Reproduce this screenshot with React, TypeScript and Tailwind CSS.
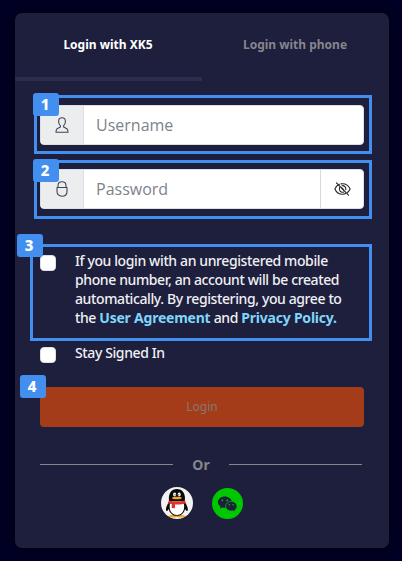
import React from 'react';

function Badge({ n, className }: { n: number; className: string }) {
  return (
    <span
      className={`absolute z-10 flex h-[23px] w-[26px] items-center justify-center rounded-[3px] bg-[#438ff0] pr-[2px] text-[15px] font-extrabold leading-none text-white ${className}`}
    >
      {n}
    </span>
  );
}

function Frame({ n, className, badge }: { n: number; className: string; badge: string }) {
  return (
    <div className={`pointer-events-none absolute border-3 border-[#438ff0] ${className}`}>
      <Badge n={n} className={badge} />
    </div>
  );
}

function UserIcon() {
  return (
    <svg width="14" height="16" viewBox="0 0 14 16" fill="none" stroke="#3d4557" strokeWidth="1.1" strokeLinejoin="round">
      <path d="M7 .7C4.900.7 3.600 2.200 3.600 4.400c0 1.900.7 3.300 1.800 4.200v1.500L2.100 11.700C1.200 12.200 1 13.500 1 15.200h12c0-1.700-.2-3-1.100-3.500L8.600 10.100V8.600c1.100-.9 1.800-2.300 1.800-4.200C10.400 2.200 9.100.7 7 .7Z" />
    </svg>
  );
}

function LockIcon() {
  return (
    <svg width="14" height="16" viewBox="0 0 14 16" fill="none" stroke="#3d4557" strokeWidth="1.100" strokeLinejoin="round">
      <path d="M3 6.500V4.600C3 2.200 4.700.7 7 .7s4 1.500 4 3.900v1.900" />
      <path d="M2 6.500h10v4c0 2.800-2 4.700-5 4.700s-5-1.900-5-4.700Z" />
    </svg>
  );
}

function EyeOffIcon() {
  return (
    <svg width="17" height="14" viewBox="0 0 17 14" fill="none" stroke="#222" strokeWidth="1.100" strokeLinecap="round">
      <path d="M5.300 2.200C3.300 3.200 1.800 4.900.9 7c1.400 3.300 4.300 5.300 7.600 5.300 1.100 0 2.200-.2 3.100-.7M6.900 1.900c.5-.1 1-.2 1.600-.2 3.300 0 6.200 2 7.600 5.300-.6 1.400-1.500 2.600-2.600 3.500" />
      <path d="M5.800 5.200A3.300 3.300 0 0 0 9.800 10M8 3.700A3.300 3.300 0 0 1 11.800 7.600M7.700 6l2 2" />
      <path d="m2.500.8 12 12.400" />
    </svg>
  );
}

function QQIcon() {
  return (
    <svg width="32" height="32" viewBox="0 0 32 32">
      <circle cx="16" cy="16" r="16" fill="#f3f3f3" />
      <ellipse cx="12" cy="29.200" rx="4.200" ry="1.300" fill="#f2a622" />
      <ellipse cx="19.800" cy="29.200" rx="4.200" ry="1.300" fill="#f2a622" />
      <path d="M8 15C5.800 18.200 4.500 21.500 5.100 23.600c.5 1.100 1.800-.3 2.600-1.700 1 4.400 4.300 6.900 8.200 6.900s7.200-2.500 8.200-6.900c.8 1.400 2.100 2.800 2.600 1.700.6-2.100-.7-5.400-2.900-8.600Z" fill="#080808" />
      <path d="M9 16.500h13.800c1.400 6.300-1.400 11.400-6.900 11.400S7.600 22.800 9 16.500Z" fill="#fff" />
      <path d="M8 14C7 6.300 10.300 1.900 15.900 1.900S24.800 6.300 23.800 14Z" fill="#080808" />
      <ellipse cx="13.600" cy="7.500" rx="1.500" ry="2" fill="#fff" />
      <ellipse cx="18.200" cy="7.500" rx="1.500" ry="2" fill="#fff" />
      <circle cx="14" cy="7.800" r=".6" fill="#080808" />
      <circle cx="17.800" cy="7.800" r=".6" fill="#080808" />
      <ellipse cx="15.900" cy="11" rx="4.900" ry="1.300" fill="#f2a622" />
      <path d="M7.700 13.400c5 1.200 11.400 1.200 16.400 0l.7 2.800c-3.300 1.100-7 1.400-10.800 1.200v3.900l-3.300-.2v-4c-1.300-.2-2.500-.5-3.700-.9Z" fill="#dd3528" />
    </svg>
  );
}

function WeChatIcon() {
  return (
    <svg width="31" height="31" viewBox="0 0 31 31">
      <circle cx="15.500" cy="15.500" r="15.500" fill="#00c800" />
      <g fill="#1d1f3d">
        <path d="M12.800 8.400c-3.900 0-6.900 2.500-6.900 5.700 0 1.800 1 3.400 2.600 4.500l-.7 2 2.600-1.200c.8.200 1.600.3 2.400.3 3.900 0 7-2.500 7-5.600s-3.100-5.700-7-5.700Z" />
        <path d="M19.300 13.400c-3.200 0-5.700 2.100-5.700 4.800s2.500 4.800 5.700 4.800c.7 0 1.300-.1 1.900-.3l2.100 1-.5-1.700c1.400-.9 2.200-2.200 2.200-3.800 0-2.700-2.500-4.800-5.700-4.800Z" stroke="#00c800" strokeWidth=".7" />
      </g>
      <g fill="#00c800">
        <circle cx="10.400" cy="12.300" r=".9" />
        <circle cx="15.200" cy="12.300" r=".9" />
        <circle cx="17.400" cy="16.700" r=".8" />
        <circle cx="21.200" cy="16.700" r=".8" />
      </g>
    </svg>
  );
}

function Field({ icon, label, trailing }: { icon: React.ReactNode; label: string; trailing?: React.ReactNode }) {
  return (
    <div className="flex h-10 w-[324px] overflow-hidden rounded-[4px] border border-[#dcdfe6] bg-white">
      <span className="flex w-[43px] items-center justify-center border-r border-[#dcdfe6] bg-[#ebedef]">{icon}</span>
      <span className="flex flex-1 items-center pl-3 font-['Open_Sans','Noto_Sans',sans-serif] text-[16px] text-[#7d838c]">
        {label}
      </span>
      {trailing && (
        <span className="flex w-[43px] items-center justify-center border-l border-[#d5d9e2]">{trailing}</span>
      )}
    </div>
  );
}

function Check() {
  return <span className="size-4 shrink-0 rounded-[4px] border border-[#dcdfe6] bg-white" />;
}

function Link({ children }: { children: React.ReactNode }) {
  return <b className="tracking-[-0.220px] text-[#7fd6fa]">{children}</b>;
}

export default function App() {
  return (
    <div className="h-[561px] w-[402px] overflow-hidden bg-[#000026] px-[15px] pt-[13px] font-['Noto_Sans',sans-serif]">
      <main className="relative h-[535px] w-[374px] rounded-[7px] bg-[#1d1f3d] shadow-[0_0_16px_2px_rgba(0,0,0,0.500)]">
        <nav className="flex h-[68px] text-[12px] font-bold">
          <div className="flex w-[187px] items-center justify-center border-b-4 border-[#2b2d4d] pr-px text-white">
            <span>Login with XK5</span>
          </div>
          <div className="flex w-[187px] items-center justify-center border-b-4 border-transparent pr-px text-[#85868b]">
            <span>Login with phone</span>
          </div>
        </nav>

        <form className="px-[25px] pt-6">
          <Field icon={<UserIcon />} label="Username" />
          <div className="mt-6">
            <Field icon={<LockIcon />} label="Password" trailing={<EyeOffIcon />} />
          </div>

          <div className="mt-[42px] flex gap-[19px] text-[14px] font-medium leading-[19px] tracking-[-0.390px] text-[#f0f0f3]">
            <div className="mt-1 flex">
              <Check />
            </div>
            <p className="whitespace-nowrap">
              If you login with an unregistered mobile
              <br />
              phone number, an account will be created
              <br />
              automatically. By registering, you agree to
              <br />
              the <Link>User Agreement</Link> and <Link>Privacy Policy.</Link>
            </p>
          </div>
          <div className="mt-4 flex gap-[19px] text-[14px] font-medium leading-[19px] tracking-[-0.390px] text-[#f0f0f3]">
            <div className="mt-1 flex">
              <Check />
            </div>
            <span>Stay Signed In</span>
          </div>

          <div className="relative mt-6 flex h-10 items-center justify-center rounded-[4px] bg-[#a43c19] text-[12px] text-[#85786f]">
            <span>Login</span>
            <Badge n={4} className="-left-5 -top-3" />
          </div>

          <div className="mt-[27px] flex h-5 w-[322px] items-center justify-between text-[14px] font-bold text-[#85868b]">
            <span className="h-px w-[133px] bg-[#85868b]" />
            <span>Or</span>
            <span className="h-px w-[133px] bg-[#85868b]" />
          </div>
          <div className="mt-[13px] flex items-end justify-center gap-[19px]">
            <QQIcon />
            <WeChatIcon />
          </div>
        </form>

        <Frame n={1} className="left-[19px] top-[82px] h-[59px] w-[338px]" badge="-left-1 -top-[5px]" />
        <Frame n={2} className="left-[19px] top-[147px] h-[59px] w-[338px]" badge="-left-1 -top-1" />
        <Frame n={3} className="left-[15px] top-[231px] h-[97px] w-[342px]" badge="-left-4 -top-[13px]" />
      </main>
    </div>
  );
}
